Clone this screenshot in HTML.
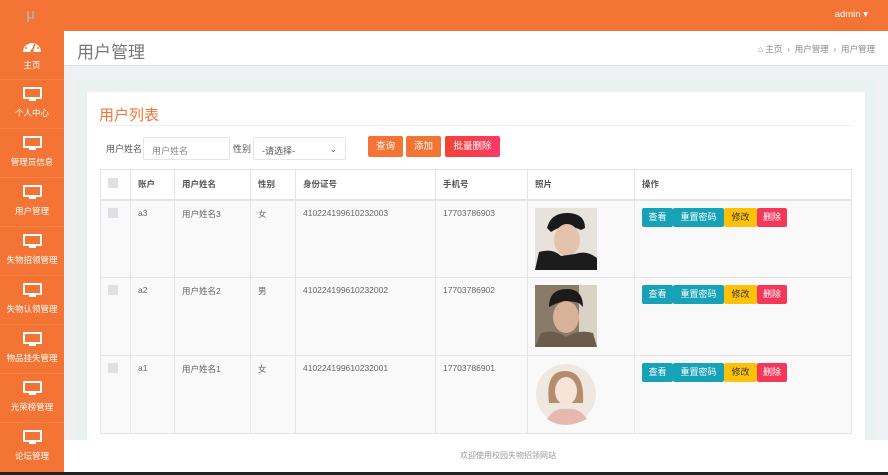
<!DOCTYPE html>
<html><head><meta charset="utf-8"><style>
*{margin:0;padding:0;box-sizing:border-box}
body{width:888px;height:475px;overflow:hidden;background:#eef0f4;font-family:"Liberation Sans","Noto Sans CJK SC",sans-serif;font-size:9px;color:#555;position:relative}
.top{position:absolute;left:0;top:0;width:888px;height:31px;background:#f37434}
.logo{position:absolute;left:26px;top:6px;color:#b9a8a0;font-size:15px;font-weight:bold}
.admin{position:absolute;right:20px;top:9px;color:#fff;font-size:9.5px}
.side{position:absolute;left:0;top:31px;width:64px;height:441px;background:#f37434}
.mi{height:49px;border-bottom:1px solid #f5843f;text-align:center;color:#fff;font-size:8.5px;padding-top:7px}
.mon{width:19px;height:14px;margin:0 auto 6px;position:relative}
.mon:before{content:"";position:absolute;left:0;top:0;width:19px;height:12px;border:2.5px solid #fff;border-radius:1px;box-sizing:border-box}
.mon:after{content:"";position:absolute;left:6px;top:12px;width:7px;height:2px;background:#fff}
.hdr{position:absolute;left:64px;top:31px;width:824px;height:35px;background:#fff;border-bottom:1px solid #dde}
.hdr h1{position:absolute;left:13px;top:7px;font-size:17px;font-weight:normal;color:#777}
.bc{position:absolute;right:13px;top:12px;font-size:8.5px;color:#888}
.green{position:absolute;left:75px;top:80px;width:800px;height:360px;background:#e8f2ee}
.card{position:absolute;left:87px;top:92px;width:778px;height:348px;background:#fff}
.ttl{position:absolute;left:12px;top:12px;font-size:15px;color:#f37434}
.line{position:absolute;left:12px;top:33px;width:754px;height:1px;background:#eee}
.lab{position:absolute;top:50px;font-size:9px;color:#555}
.inp{position:absolute;top:45px;height:23px;border:1px solid #e5e5e5;border-radius:2px;padding:6px 8px;color:#888;font-size:9px}
.btn{position:absolute;top:44px;height:21px;color:#fff;font-size:9.5px;text-align:center;line-height:21px;border-radius:2px}
table{position:absolute;left:13px;top:77px;width:752px;border-collapse:collapse}
td,th{border:1px solid #e3e3e8;text-align:left;vertical-align:top;font-size:8.5px;padding:0 7px}
th{height:30px;vertical-align:middle;font-weight:bold;color:#555;border-bottom:2px solid #e3e3e8}
td{height:78px;padding-top:7px;background:#f9f9f9;color:#666}
.cb{display:inline-block;width:10px;height:10px;background:#dde0e5}
.ph{width:62px;height:62px;display:block}
.ob{display:inline-block;height:19px;line-height:19px;color:#fff;font-size:9px;text-align:center;border-radius:2px}
.foot{position:absolute;left:64px;top:440px;width:824px;height:32px;background:#fff;text-align:center;line-height:32px;color:#999;font-size:8px;padding-left:64px}
.black{position:absolute;left:0;top:472px;width:888px;height:3px;background:#222}
</style></head><body>
<div class="top"><div class="logo">μ</div><div class="admin">admin ▾</div></div>
<div class="side">
<div class="mi"><svg width="20" height="16" viewBox="0 0 20 16" style="display:block;margin:0 auto 5px"><path d="M1 14A9 9 0 1 1 19 14Z" fill="#fff"/><path d="M10 13L13 6" stroke="#f37434" stroke-width="1.6"/><circle cx="10" cy="13" r="1.6" fill="#f37434"/><circle cx="4" cy="10" r="1" fill="#f37434"/><circle cx="6" cy="5.5" r="1" fill="#f37434"/><circle cx="10" cy="4" r="1" fill="#f37434"/><circle cx="16" cy="10" r="1" fill="#f37434"/></svg>主页</div>
<div class="mi"><div class="mon"></div>个人中心</div>
<div class="mi"><div class="mon"></div>管理员信息</div>
<div class="mi"><div class="mon"></div>用户管理</div>
<div class="mi"><div class="mon"></div>失物招领管理</div>
<div class="mi"><div class="mon"></div>失物认领管理</div>
<div class="mi"><div class="mon"></div>物品挂失管理</div>
<div class="mi"><div class="mon"></div>光荣榜管理</div>
<div class="mi" style="border:none"><div class="mon"></div>论坛管理</div>
</div>
<div class="hdr"><h1>用户管理</h1><div class="bc">⌂ 主页 &nbsp;›&nbsp; 用户管理 &nbsp;›&nbsp; 用户管理</div></div>
<div class="green"></div>
<div class="card">
<div class="ttl">用户列表</div><div class="line"></div>
<div class="lab" style="left:19px">用户姓名</div>
<div class="inp" style="left:56px;width:87px">用户姓名</div>
<div class="lab" style="left:146px">性别</div>
<div class="inp" style="left:166px;width:93px;color:#555">-请选择-<span style="float:right">⌄</span></div>
<div class="btn" style="left:281px;width:35px;background:#f37434">查询</div>
<div class="btn" style="left:319px;width:35px;background:#f37434">添加</div>
<div class="btn" style="left:358px;width:55px;background:linear-gradient(90deg,#f44336,#f83a66)">批量删除</div>
<table>
<tr><th style="width:30px"><span class="cb"></span></th><th style="width:44px">账户</th><th style="width:76px">用户姓名</th><th style="width:45px">性别</th><th style="width:140px">身份证号</th><th style="width:92px">手机号</th><th style="width:107px">照片</th><th>操作</th></tr>
<tr><td><span class="cb"></span></td><td>a3</td><td>用户姓名3</td><td>女</td><td>410224199610232003</td><td>17703786903</td><td><svg class="ph" viewBox="0 0 62 62"><rect width="62" height="62" fill="#e8e2dc"/><path d="M12 20Q16 4 34 5Q50 6 50 20L46 22Q30 14 16 24Z" fill="#1a1a1a"/><ellipse cx="32" cy="32" rx="13" ry="16" fill="#e5c2ad"/><path d="M0 62L4 44Q18 40 26 48L40 46Q52 42 62 50V62Z" fill="#1c1c1c"/></svg></td><td><span class="ob" style="width:31px;background:#17a2b8">查看</span><span class="ob" style="width:51px;background:#17a2b8">重置密码</span><span class="ob" style="width:33px;background:#ffc107;color:#333">修改</span><span class="ob" style="width:30px;background:#f5385a">删除</span></td></tr>
<tr><td><span class="cb"></span></td><td>a2</td><td>用户姓名2</td><td>男</td><td>410224199610232002</td><td>17703786902</td><td><svg class="ph" viewBox="0 0 62 62"><rect width="62" height="62" fill="#8a7a68"/><rect x="44" width="18" height="62" fill="#d9d2c5"/><path d="M14 22Q14 4 32 4Q48 4 48 22L44 18Q30 14 18 20Z" fill="#1d1a18"/><ellipse cx="31" cy="32" rx="13" ry="16" fill="#d9b199"/><path d="M0 62L6 48Q20 44 31 52Q44 44 58 48L62 62Z" fill="#6b5d4c"/></svg></td><td><span class="ob" style="width:31px;background:#17a2b8">查看</span><span class="ob" style="width:51px;background:#17a2b8">重置密码</span><span class="ob" style="width:33px;background:#ffc107;color:#333">修改</span><span class="ob" style="width:30px;background:#f5385a">删除</span></td></tr>
<tr><td><span class="cb"></span></td><td>a1</td><td>用户姓名1</td><td>女</td><td>410224199610232001</td><td>17703786901</td><td><svg class="ph" viewBox="0 0 62 62"><circle cx="31" cy="31" r="30" fill="#efe8e0"/><path d="M14 40Q10 8 30 8Q50 8 48 40Z" fill="#b58d6c"/><ellipse cx="31" cy="28" rx="11" ry="14" fill="#f7e3d8"/><path d="M12 56Q20 44 31 46Q44 44 52 56Q40 62 31 62Q20 62 12 56Z" fill="#e7b9ae"/></svg></td><td><span class="ob" style="width:31px;background:#17a2b8">查看</span><span class="ob" style="width:51px;background:#17a2b8">重置密码</span><span class="ob" style="width:33px;background:#ffc107;color:#333">修改</span><span class="ob" style="width:30px;background:#f5385a">删除</span></td></tr>
</table>
</div>
<div class="foot">欢迎使用校园失物招领网站</div>
<div class="black"></div>
</body></html>
